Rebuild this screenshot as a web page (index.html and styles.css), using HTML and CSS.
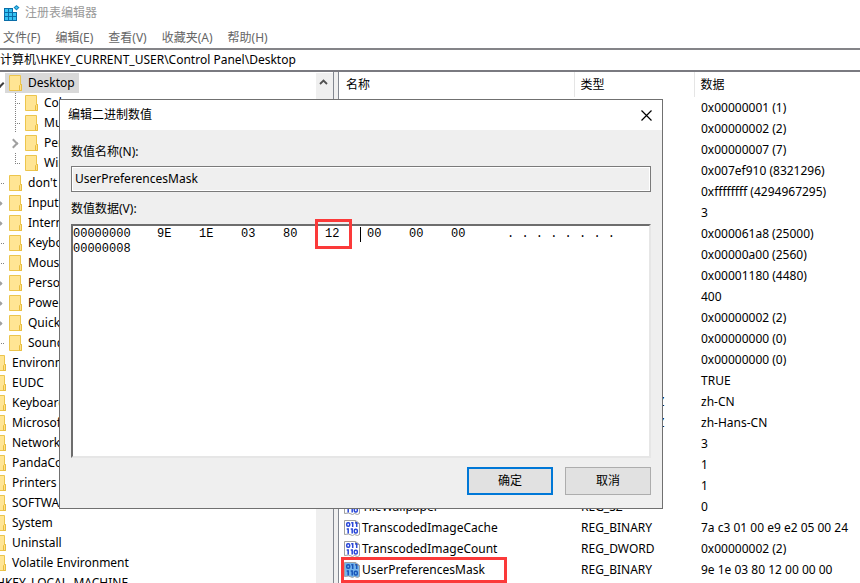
FILE: index.html
```
<!DOCTYPE html>
<html lang="zh-CN">
<head>
  <meta charset="UTF-8" />
  <meta name="viewport" content="width=device-width, initial-scale=1" />
  <title>注册表编辑器</title>
  <link rel="stylesheet" href="styles.css">
</head>
<body>

  <!-- Ícones reutilizados -->
  <svg class="sprite" aria-hidden="true">
    <symbol id="folder" viewBox="0 0 14 16">
      <path d="M.5 .5h11v9h1v6H.5z" fill="#ffe594" stroke="#ecc54d"/>
      <path d="M10.500 15.500v-5l1-1h1v6z" fill="#ffe08a" stroke="#e8bd3e"/>
    </symbol>
    <symbol id="binary" viewBox="0 0 16 16">
      <path class="page" d="M.5 .5h11l4 3v11l-2 1-3-1-2 1-4-1.500-4 .5z"/>
      <path class="fold" d="M11.500 .5v3h4" fill="none"/>
      <g class="bits" fill="none" stroke-width="1.500">
        <rect x="2.700" y="2.700" width="3" height="3.600" rx="1.200"/>
        <path d="M7.200 2.700h1.500V7M11.200 2.700h1.500V7M2.700 9h1.500v4.500M6.700 9h1.500v4.500"/>
        <rect x="10.300" y="9.300" width="3" height="3.600" rx="1.200"/>
      </g>
    </symbol>
  </svg>

  <div class="window">
    <header class="titlebar">
      <svg class="app-icon" viewBox="0 0 16 16" aria-hidden="true">
        <path d="M0 3h9v4h4v9H0z" fill="#0a6da8"/>
        <path d="M1 4h3v3H1zM5 4h3v3H5zM1 8h3v3H1zM5 8h3v3H5zM9 8h3v3H9zM1 12h3v3H1zM5 12h3v3H5zM9 12h3v3H9z" fill="#35c3f3"/>
        <path d="M12.500 0l3 2.500-3 3-3-3z" fill="#1287c0"/>
        <path d="M12.500 1.500l1.500 1-1.500 1.500-1.500-1.500z" fill="#4cc9f5"/>
      </svg>
      <span>注册表编辑器</span>
    </header>

    <nav class="menu">
      <button type="button">文件(F)</button>
      <button type="button">编辑(E)</button>
      <button type="button">查看(V)</button>
      <button type="button">收藏夹(A)</button>
      <button type="button">帮助(H)</button>
    </nav>

    <input class="address" type="text" aria-label="地址" value="计算机\HKEY_CURRENT_USER\Control Panel\Desktop">

    <main class="panes">
      <section class="tree-pane">
        <ul class="tree">
          <li class="level-2"><span class="twist open"></span><span class="node selected"><svg><use href="#folder"/></svg>Desktop</span></li>
          <li class="level-3"><span class="twist line"></span><span class="node"><svg><use href="#folder"/></svg>Colors</span></li>
          <li class="level-3"><span class="twist line"></span><span class="node"><svg><use href="#folder"/></svg>MuiCached</span></li>
          <li class="level-3"><span class="twist closed"></span><span class="node"><svg><use href="#folder"/></svg>PerMonitorSettings</span></li>
          <li class="level-3"><span class="twist line last"></span><span class="node"><svg><use href="#folder"/></svg>WindowMetrics</span></li>
          <li class="level-2"><span class="twist line"></span><span class="node"><svg><use href="#folder"/></svg>don't load</span></li>
          <li class="level-2"><span class="twist closed"></span><span class="node"><svg><use href="#folder"/></svg>Input Method</span></li>
          <li class="level-2"><span class="twist closed"></span><span class="node"><svg><use href="#folder"/></svg>International</span></li>
          <li class="level-2"><span class="twist line"></span><span class="node"><svg><use href="#folder"/></svg>Keyboard</span></li>
          <li class="level-2"><span class="twist line"></span><span class="node"><svg><use href="#folder"/></svg>Mouse</span></li>
          <li class="level-2"><span class="twist closed"></span><span class="node"><svg><use href="#folder"/></svg>Personalization</span></li>
          <li class="level-2"><span class="twist closed"></span><span class="node"><svg><use href="#folder"/></svg>PowerCfg</span></li>
          <li class="level-2"><span class="twist closed"></span><span class="node"><svg><use href="#folder"/></svg>Quick Actions</span></li>
          <li class="level-2"><span class="twist line last"></span><span class="node"><svg><use href="#folder"/></svg>Sound</span></li>
          <li class="level-1"><span class="twist"></span><span class="node"><svg><use href="#folder"/></svg>Environment</span></li>
          <li class="level-1"><span class="twist"></span><span class="node"><svg><use href="#folder"/></svg>EUDC</span></li>
          <li class="level-1"><span class="twist"></span><span class="node"><svg><use href="#folder"/></svg>Keyboard Layout</span></li>
          <li class="level-1"><span class="twist"></span><span class="node"><svg><use href="#folder"/></svg>Microsoft</span></li>
          <li class="level-1"><span class="twist"></span><span class="node"><svg><use href="#folder"/></svg>Network</span></li>
          <li class="level-1"><span class="twist"></span><span class="node"><svg><use href="#folder"/></svg>PandaCode</span></li>
          <li class="level-1"><span class="twist"></span><span class="node"><svg><use href="#folder"/></svg>Printers</span></li>
          <li class="level-1"><span class="twist"></span><span class="node"><svg><use href="#folder"/></svg>SOFTWARE</span></li>
          <li class="level-1"><span class="twist"></span><span class="node"><svg><use href="#folder"/></svg>System</span></li>
          <li class="level-1"><span class="twist"></span><span class="node"><svg><use href="#folder"/></svg>Uninstall</span></li>
          <li class="level-1"><span class="twist"></span><span class="node"><svg><use href="#folder"/></svg>Volatile Environment</span></li>
          <li class="level-0"><span class="twist"></span><span class="node"><svg><use href="#folder"/></svg>HKEY_LOCAL_MACHINE</span></li>
        </ul>
        <div class="scrollbar">
          <button type="button" aria-label="向上滚动">
            <svg viewBox="0 0 9 6"><path d="M1 5l3.500-3.500L8 5" fill="none" stroke="#505050" stroke-width="1.800"/></svg>
          </button>
        </div>
      </section>

      <section class="list-pane">
        <table class="values">
          <colgroup><col class="col-name"><col class="col-type"><col></colgroup>
          <thead>
            <tr><th>名称</th><th>类型</th><th>数据</th></tr>
          </thead>
          <tbody>
            <tr><td></td><td></td><td>0x00000001 (1)</td></tr>
            <tr><td></td><td></td><td>0x00000002 (2)</td></tr>
            <tr><td></td><td></td><td>0x00000007 (7)</td></tr>
            <tr><td></td><td></td><td>0x007ef910 (8321296)</td></tr>
            <tr><td></td><td></td><td>0xffffffff (4294967295)</td></tr>
            <tr><td></td><td></td><td>3</td></tr>
            <tr><td></td><td></td><td>0x000061a8 (25000)</td></tr>
            <tr><td></td><td></td><td>0x00000a00 (2560)</td></tr>
            <tr><td></td><td></td><td>0x00001180 (4480)</td></tr>
            <tr><td></td><td></td><td>400</td></tr>
            <tr><td></td><td></td><td>0x00000002 (2)</td></tr>
            <tr><td></td><td></td><td>0x00000000 (0)</td></tr>
            <tr><td></td><td></td><td>0x00000000 (0)</td></tr>
            <tr><td></td><td></td><td>TRUE</td></tr>
            <tr><td></td><td>REG_MULTI_SZ</td><td>zh-CN</td></tr>
            <tr><td></td><td>REG_MULTI_SZ</td><td>zh-Hans-CN</td></tr>
            <tr><td></td><td></td><td>3</td></tr>
            <tr><td></td><td></td><td>1</td></tr>
            <tr><td></td><td></td><td>1</td></tr>
            <tr><td><svg><use href="#binary"/></svg>TileWallpaper</td><td>REG_SZ</td><td>0</td></tr>
            <tr><td><svg><use href="#binary"/></svg>TranscodedImageCache</td><td>REG_BINARY</td><td>7a c3 01 00 e9 e2 05 00 24</td></tr>
            <tr><td><svg><use href="#binary"/></svg>TranscodedImageCount</td><td>REG_DWORD</td><td>0x00000002 (2)</td></tr>
            <tr class="current"><td><svg><use href="#binary"/></svg>UserPreferencesMask</td><td>REG_BINARY</td><td>9e 1e 03 80 12 00 00 00</td></tr>
            <tr><td><svg><use href="#binary"/></svg></td><td></td><td></td></tr>
          </tbody>
        </table>
      </section>
    </main>
  </div>

  <form class="dialog" role="dialog" aria-labelledby="dialogTitle">
    <div class="dialog-title">
      <span id="dialogTitle">编辑二进制数值</span>
      <button type="button" class="close" aria-label="关闭">
        <svg viewBox="0 0 11 11"><path d="M.5 .5l10 10M10.500 .5l-10 10" stroke="#000" stroke-width="1.200"/></svg>
      </button>
    </div>
    <div class="dialog-body">
      <label for="valueName">数值名称(N):</label>
      <input id="valueName" class="value-name" type="text" value="UserPreferencesMask" readonly>

      <label for="byte0">数值数据(V):</label>
      <div class="hex">
        <div class="hex-row">
          <span>00000000</span>
          <span class="byte"><input id="byte0" type="text" value="9E" maxlength="2"></span>
          <span class="byte"><input type="text" value="1E" maxlength="2" aria-label="字节 1"></span>
          <span class="byte"><input type="text" value="03" maxlength="2" aria-label="字节 2"></span>
          <span class="byte"><input type="text" value="80" maxlength="2" aria-label="字节 3"></span>
          <span class="byte marked"><input type="text" value="12" maxlength="2" aria-label="字节 4"></span>
          <span class="byte caret"><input type="text" value="00" maxlength="2" aria-label="字节 5"></span>
          <span class="byte"><input type="text" value="00" maxlength="2" aria-label="字节 6"></span>
          <span class="byte"><input type="text" value="00" maxlength="2" aria-label="字节 7"></span>
          <span class="ascii">. . . . . . . .</span>
        </div>
        <div class="hex-row"><span>00000008</span></div>
      </div>

      <div class="actions">
        <button type="submit" class="default">确定</button>
        <button type="button">取消</button>
      </div>
    </div>
  </form>

</body>
</html>
```
FILE: styles.css
```
*, *::before, *::after {
  box-sizing: border-box;
}

body {
  margin: 0;
  font-family: "Noto Sans", "Noto Sans CJK SC", sans-serif;
  font-size: 12px;
  line-height: 20px;
  color: #000;
  background: #fff;
  overflow: hidden;
}

button, input {
  font: inherit;
  color: inherit;
  margin: 0;
  padding: 0;
  border: none;
  border-radius: 0;
  background: none;
  outline: none;
}

.sprite {
  display: none;
}

.window {
  display: flex;
  flex-direction: column;
  height: 100vh;
}

/* Barra de título e menu */
.titlebar {
  display: flex;
  align-items: center;
  gap: 5px;
  height: 26px;
  padding-left: 4px;
  color: #999;
}

.app-icon {
  width: 16px;
  height: 16px;
}

.menu {
  display: flex;
  gap: 15px;
  height: 22px;
  padding: 1px 0 0 3px;
  color: #666;
}

.menu button {
  height: 22px;
}

.address {
  width: 100%;
  height: 24px;
  padding-bottom: 2px;
  border-top: 2px solid #848488;
  border-bottom: 2px solid #7a7a80;
  flex-shrink: 0;
}

.panes {
  display: flex;
  flex: 1;
  min-height: 0;
  background: #efefef;
}

/* Árvore */
.tree-pane {
  display: flex;
  flex: 0 0 334px;
  background: #fff;
  border-right: 1px solid #828790;
  overflow: hidden;
}

.tree {
  flex: 1;
  min-width: 0;
  margin: 0;
  padding: 1px 0 0;
  list-style: none;
}

.tree li {
  display: flex;
  height: 20px;
  white-space: nowrap;
}

.level-0 { margin-left: -43px; }
.level-1 { margin-left: -27px; }
.level-2 { margin-left: -11px; }
.level-3 { margin-left: 5px; }

.node {
  display: flex;
  align-items: center;
  gap: 5px;
  padding: 0 4px;
}

.node.selected {
  background: #d9d9d9;
}

.node svg {
  width: 14px;
  height: 16px;
}

.twist {
  display: flex;
  align-items: center;
  width: 16px;
}

.line {
  background:
    repeating-linear-gradient(to bottom, #808080 0 1px, transparent 1px 2px) 10px 0 / 1px 100% no-repeat,
    repeating-linear-gradient(to right, #808080 0 1px, transparent 1px 2px) 10px 10px / 6px 1px no-repeat;
}

.line.last {
  background-size: 1px 50%, 6px 1px;
}

.level-2 .line {
  background-size: 0 0, 6px 1px;
  background-position: 0 0, 12px 10px;
}

.open::before, .closed::before {
  content: "";
  width: 7px;
  height: 7px;
  margin-left: 5px;
  border: solid #a0a0a0;
  border-width: 2px 2px 0 0;
  transform: rotate(45deg);
}

.open::before {
  margin-left: 7px;
  border-color: #404040;
  transform: rotate(135deg);
}

.scrollbar {
  width: 17px;
  margin-top: 1px;
  background: #efefef;
}

.scrollbar button {
  display: flex;
  align-items: center;
  justify-content: center;
  width: 15px;
  height: 18px;
}

.scrollbar svg {
  width: 9px;
  height: 6px;
}

/* Lista de valores */
.list-pane {
  flex: 1;
  min-width: 0;
  margin-left: 4px;
  background: #fff;
  border-left: 1px solid #828790;
  overflow: hidden;
}

.values {
  width: 100%;
  table-layout: fixed;
  border-collapse: collapse;
}

.col-name { width: 235px; }
.col-type { width: 120px; }

.values th {
  height: 25px;
  padding: 0 7px;
  font-weight: normal;
  text-align: left;
}

.values th + th {
  padding-left: 6px;
  border-left: 1px solid #e5e5e5;
}

.values td {
  height: 21px;
  padding: 0 0 0 7px;
  white-space: nowrap;
}

.values td:first-child {
  padding-left: 5px;
}

.values svg {
  width: 16px;
  height: 16px;
  margin-right: 2px;
  vertical-align: middle;
}

.page {
  fill: var(--page, #fff);
  stroke: #a0a0a0;
}

.fold { stroke: #a0a0a0; }
.bits { stroke: var(--bits, #2a48d8); }

.current svg {
  --page: #74b4ec;
  --bits: #1a56b8;
}

.current td:first-child {
  position: relative;
}

.current td:first-child::after {
  content: "";
  position: absolute;
  top: -2px;
  left: 2px;
  width: 166px;
  height: 26px;
  border: 3px solid #fb3a3a;
}

/* Janela de edição */
.dialog {
  position: absolute;
  top: 99px;
  left: 59px;
  width: 604px;
  background: #efefef;
  border: 1px solid #707070;
}

.dialog-title {
  display: flex;
  align-items: center;
  justify-content: space-between;
  height: 30px;
  padding: 0 10px 0 8px;
  background: #fff;
}

.close {
  display: flex;
  padding: 0;
}

.close svg {
  width: 11px;
  height: 11px;
}

.dialog-body {
  display: flex;
  flex-direction: column;
  padding: 12px 11px 13px 11px;
}

.value-name {
  height: 26px;
  margin: 4px 0 7px;
  padding: 0 3px 2px;
  border: 1px solid #7a7a7a;
  box-shadow: inset 0 0 0 1px #fff;
}

.hex {
  height: 234px;
  margin-top: 5px;
  padding: 1px 0;
  background: #fff;
  border: 2px solid;
  border-color: #6d6d6d #e6e6e6 #e6e6e6 #6d6d6d;
  font-family: "Liberation Mono", monospace;
  font-size: 12px;
  line-height: 15px;
}

.hex-row {
  display: grid;
  grid-template-columns: 84px repeat(8, 42px) 1fr;
  height: 15px;
}

.byte {
  position: relative;
}

.byte input {
  display: block;
  width: 20px;
  height: 15px;
}

.marked::after {
  content: "";
  position: absolute;
  top: -8px;
  left: -10px;
  width: 37px;
  height: 30px;
  border: 3px solid #fb3a3a;
}

.caret::before {
  content: "";
  position: absolute;
  top: 0;
  left: -7px;
  width: 1px;
  height: 15px;
  background: #000;
}

.ascii {
  padding-left: 14px;
}

.actions {
  display: flex;
  justify-content: flex-end;
  gap: 12px;
  margin-top: 9px;
}

.actions button {
  width: 86px;
  height: 28px;
  background: #e1e1e1;
  border: 1px solid #adadad;
}

.actions .default {
  border: 2px solid #0078d7;
}
```
